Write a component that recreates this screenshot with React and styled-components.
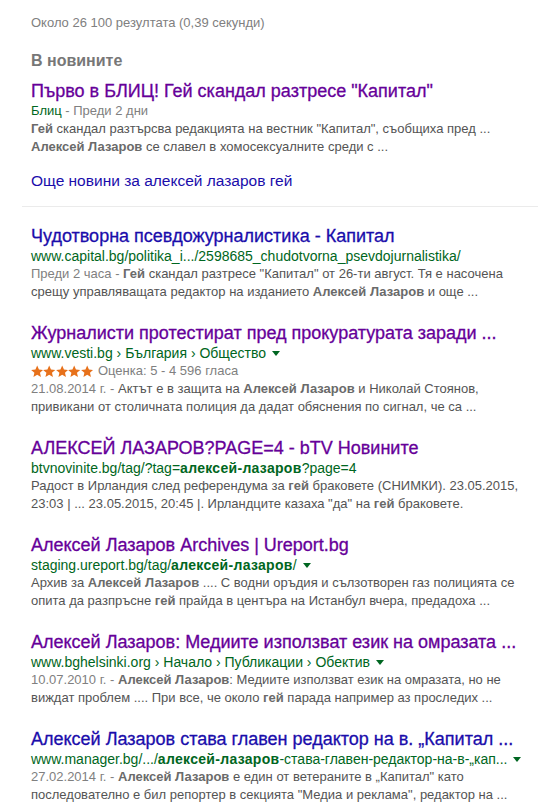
import styled, { createGlobalStyle } from "styled-components";

const GlobalStyle = createGlobalStyle`
    body {
        margin: 0;
        background-color: #ffffff;
        font-family: "Liberation Sans", Arial, sans-serif;
    }
`;

const Page = styled.div`
    width: 538px;
    padding-top: 15px;
`;

const Inner = styled.div`
    padding-left: 31px;
`;

const Stats = styled.div`
    font-size: 13px;
    line-height: 16px;
    color: #808080;
`;

const NewsHeading = styled.div`
    margin-top: 20px;
    font-size: 16px;
    line-height: 20px;
    font-weight: bold;
    color: #777777;
`;

const NewsBlock = styled.div`
    margin-top: 9px;
`;

const Title = styled.a`
    display: block;
    font-size: 18px;
    line-height: 22px;
    color: ${({ visited }) => (visited ? "#660099" : "#1a0dab")};
    -webkit-text-stroke: 0.3px currentColor;
    text-decoration: none;
    white-space: nowrap;
    cursor: pointer;
`;

const Line = styled.div`
    font-size: 13px;
    line-height: 18px;
    color: #545454;
    white-space: nowrap;
`;

const Source = styled.span`
    color: #006621;
`;

const Gray = styled.span`
    color: #808080;
`;

const Bold = styled.b`
    color: ${({ green }) => (green ? "#006621" : "#6a6a6a")};
    letter-spacing: ${({ green }) => (green ? "0.3px" : "0")};
`;

const Cite = styled.div`
    font-size: 14px;
    line-height: 18px;
    color: #006621;
    white-space: nowrap;
    display: flex;
    align-items: center;
`;

const Arrow = styled.span`
    display: inline-block;
    margin-left: 6px;
    margin-top: 1px;
    border-top: 5px solid #006621;
    border-left: 4px solid transparent;
    border-right: 4px solid transparent;
`;

const MoreNews = styled.a`
    display: block;
    margin-top: 15px;
    font-size: 15.5px;
    line-height: 20px;
    color: #1a0dab;
    text-decoration: none;
    cursor: pointer;
`;

const Divider = styled.hr`
    margin: 15px 0 0 22px;
    border: none;
    border-top: 1px solid #ebebeb;
    height: 0;
`;

const Results = styled.div`
    padding: 18px 0 0 31px;
    display: flex;
    flex-direction: column;
    gap: 21px;
`;

const Rating = styled.div`
    font-size: 13px;
    line-height: 18px;
    color: #808080;
    display: flex;
    align-items: center;
    gap: 5px;
`;

const Stars = styled.span`
    display: flex;
`;

// "**x**" marks the bold part of a snippet or url
function Marked({ text, green }) {
    return text.split("**").map((part, i) =>
        i % 2 === 1 ? (
            <Bold key={i} green={green}>
                {part}
            </Bold>
        ) : (
            <span key={i}>{part}</span>
        )
    );
}

function Star() {
    return (
        <svg width="12.4" height="13" viewBox="0 0 24 24">
            <path
                d="M12 0.5l3.4 7.6 8.3.8-6.3 5.6 1.9 8.2L12 18.4l-7.3 4.3 1.9-8.2L.3 8.9l8.3-.8z"
                fill="#e7711b"
            />
        </svg>
    );
}

const results = [
    {
        title: "Чудотворна псевдожурналистика - Капитал",
        visited: false,
        url: "www.capital.bg/politika_i.../2598685_chudotvorna_psevdojurnalistika/",
        arrow: false,
        date: "Преди 2 часа - ",
        lines: [
            "**Гей** скандал разтресе \"Капитал\" от 26-ти август. Тя е насочена",
            "срещу управляващата редактор на изданието **Алексей Лазаров** и още ...",
        ],
    },
    {
        title: "Журналисти протестират пред прокуратурата заради ...",
        visited: true,
        url: "www.vesti.bg › България › Общество",
        arrow: true,
        rating: "Оценка: 5 - 4 596 гласа",
        date: "21.08.2014 г. - ",
        lines: [
            "Актът е в защита на **Алексей Лазаров** и Николай Стоянов,",
            "привикани от столичната полиция да дадат обяснения по сигнал, че са ...",
        ],
    },
    {
        title: "АЛЕКСЕЙ ЛАЗАРОВ?PAGE=4 - bTV Новините",
        visited: true,
        url: "btvnovinite.bg/tag/?tag=**алексей-лазаров**?page=4",
        arrow: false,
        lines: [
            "Радост в Ирландия след референдума за **гей** браковете (СНИМКИ). 23.05.2015,",
            "23:03 | ... 23.05.2015, 20:45 |. Ирландците казаха \"да\" на **гей** браковете.",
        ],
    },
    {
        title: "Алексей Лазаров Archives | Ureport.bg",
        visited: true,
        url: "staging.ureport.bg/tag/**алексей-лазаров**/",
        arrow: true,
        lines: [
            "Архив за **Алексей Лазаров** .... С водни оръдия и сълзотворен газ полицията се",
            "опита да разпръсне **гей** прайда в центъра на Истанбул вчера, предадоха ...",
        ],
    },
    {
        title: "Алексей Лазаров: Медиите използват език на омразата ...",
        visited: true,
        url: "www.bghelsinki.org › Начало › Публикации › Обектив",
        arrow: true,
        date: "10.07.2010 г. - ",
        lines: [
            "**Алексей Лазаров**: Медиите използват език на омразата, но не",
            "виждат проблем .... При все, че около **гей** парада например аз проследих ...",
        ],
    },
    {
        title: "Алексей Лазаров става главен редактор на в. „Капитал ...",
        visited: false,
        url: "www.manager.bg/.../**алексей-лазаров**-става-главен-редактор-на-в-„кап...",
        arrow: true,
        date: "27.02.2014 г. - ",
        lines: [
            "**Алексей Лазаров** е един от ветераните в „Капитал\" като",
            "последователно е бил репортер в секцията \"Медиа и реклама\", редактор на ...",
        ],
    },
];

function Result({ item }) {
    return (
        <div>
            <Title visited={item.visited}>{item.title}</Title>
            <Cite>
                <span>
                    <Marked text={item.url} green />
                </span>
                {item.arrow && <Arrow />}
            </Cite>
            {item.rating && (
                <Rating>
                    <Stars>
                        {[0, 1, 2, 3, 4].map((n) => (
                            <Star key={n} />
                        ))}
                    </Stars>
                    {item.rating}
                </Rating>
            )}
            {item.lines.map((line, i) => (
                <Line key={i}>
                    {i === 0 && item.date && <Gray>{item.date}</Gray>}
                    <Marked text={line} />
                </Line>
            ))}
        </div>
    );
}

function App() {
    return (
        <>
            <GlobalStyle />
            <Page>
                <Inner>
                    <Stats>Около 26 100 резултата (0,39 секунди)</Stats>
                    <NewsHeading>В новините</NewsHeading>
                    <NewsBlock>
                        <Title visited>Първо в БЛИЦ! Гей скандал разтресе "Капитал"</Title>
                        <Line>
                            <Source>Блиц</Source>
                            <Gray> - Преди 2 дни</Gray>
                        </Line>
                        <Line>
                            <Marked text={'**Гей** скандал разтърсва редакцията на вестник "Капитал", съобщиха пред ...'} />
                        </Line>
                        <Line>
                            <Marked text="**Алексей Лазаров** се славел в хомосексуалните среди с ..." />
                        </Line>
                    </NewsBlock>
                    <MoreNews>Още новини за алексей лазаров гей</MoreNews>
                </Inner>
                <Divider />
                <Results>
                    {results.map((item, i) => (
                        <Result key={i} item={item} />
                    ))}
                </Results>
            </Page>
        </>
    );
}

export default App;
